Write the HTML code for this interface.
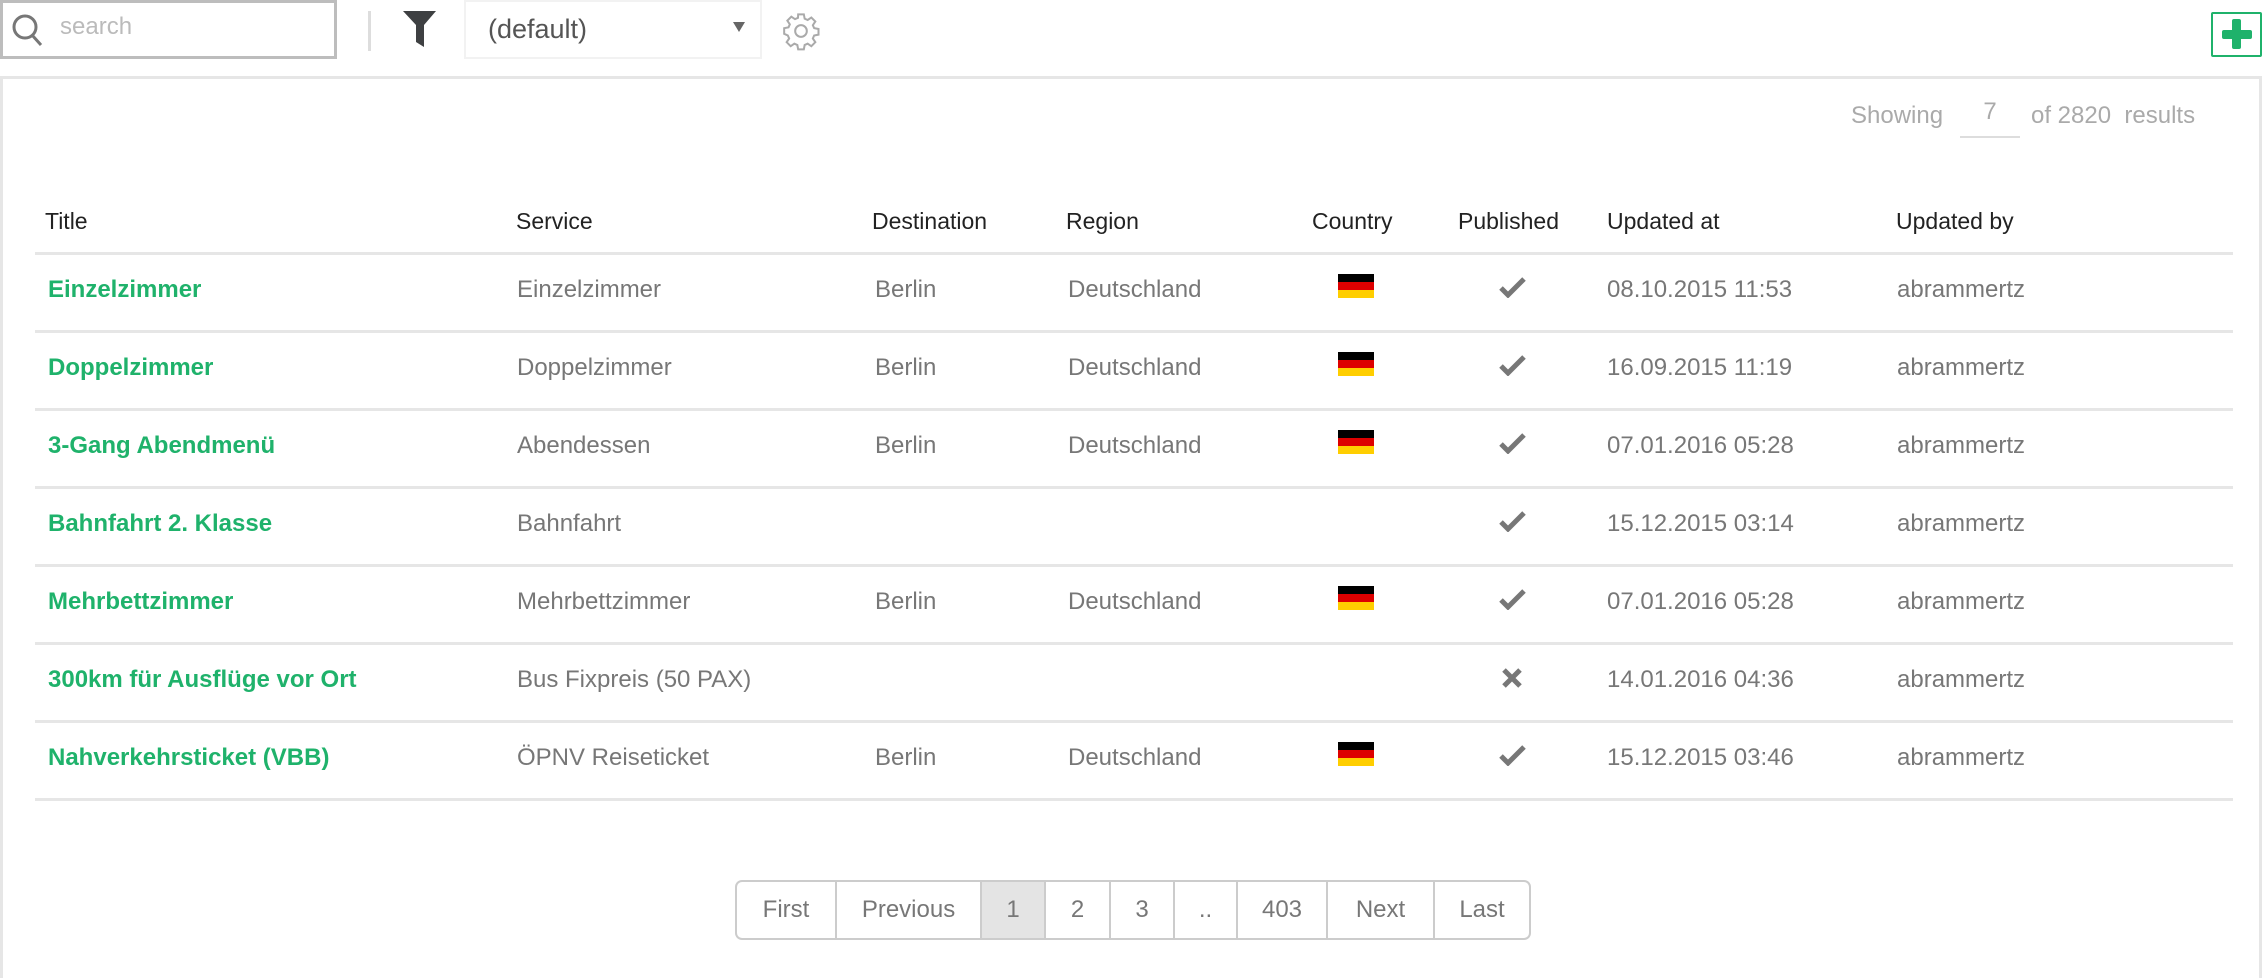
<!DOCTYPE html>
<html><head><meta charset="utf-8"><style>
*{margin:0;padding:0;box-sizing:border-box}
body{width:2264px;height:978px;background:#fff;font-family:"Liberation Sans",sans-serif;position:relative;overflow:hidden;color:#333}
.a{position:absolute;white-space:nowrap}
.search{left:0;top:0;width:337px;height:59px;border:3px solid #bdbdbd}
.sel{left:464px;top:0;width:298px;height:59px;border:2px solid #f2f2f2}
.panel{left:0;top:76px;width:2262px;height:902px;border:3px solid #e6e6e6;border-bottom:none}
.hd{top:208px;font-size:23px;color:#222}
.row{font-size:24px;color:#777}
.t{color:#1fb26b;font-weight:bold;font-size:24px}
.line{position:absolute;left:35px;width:2198px;height:3px;background:#e6e6e6}
.flag{position:absolute;left:1338px;width:36px;height:24px;background:linear-gradient(#000 0 33%,#d00 33% 66%,#ffce00 66%)}
.pg{position:absolute;left:735px;top:880px;height:60px;display:flex;border:2px solid #ccc;border-radius:7px;overflow:hidden}
.pg div{border-right:2px solid #ccc;font-size:24px;color:#777;display:flex;align-items:center;justify-content:center;height:100%}
.pg div:last-child{border-right:none}
</style></head><body>
<div class="a search"></div>
<svg class="a" style="left:11px;top:13px" width="34" height="36" viewBox="0 0 34 36"><circle cx="14" cy="14" r="11" fill="none" stroke="#777" stroke-width="3"/><line x1="21" y1="22" x2="30" y2="32" stroke="#777" stroke-width="3"/></svg>
<div class="a" style="left:60px;top:13px;font-size:24px;color:#bbb">search</div>
<div class="a" style="left:368px;top:11px;width:3px;height:40px;background:#ddd"></div>
<svg class="a" style="left:403px;top:11px" width="34" height="36" viewBox="0 0 34 36"><path d="M0 0H33L21 14V36L13 31V14Z" fill="#3e4042"/></svg>
<div class="a sel"></div>
<div class="a" style="left:488px;top:14px;font-size:27px;color:#555">(default)</div>
<div class="a" style="left:733px;top:22px;width:0;height:0;border-left:6px solid transparent;border-right:6px solid transparent;border-top:10px solid #666"></div>
<svg class="a" style="left:781px;top:11px" width="40" height="40" viewBox="0 0 24 24"><path fill="none" stroke="#aaa" stroke-width="1.2" d="M10.3 2h3.4l.5 2.6 1.8.8 2.2-1.5 2.4 2.4-1.5 2.2.8 1.8 2.6.5v3.4l-2.6.5-.8 1.8 1.5 2.2-2.4 2.4-2.2-1.5-1.8.8-.5 2.6h-3.4l-.5-2.6-1.8-.8-2.2 1.5-2.4-2.4 1.5-2.2-.8-1.8L1.9 13.7v-3.4l2.6-.5.8-1.8-1.5-2.2 2.4-2.4 2.2 1.5 1.8-.8z"/><circle cx="12" cy="12" r="3.5" fill="none" stroke="#aaa" stroke-width="1.2"/></svg>
<div class="a" style="left:2211px;top:12px;width:51px;height:45px;border:2px solid #1fb26b;border-radius:2px"></div>
<div class="a" style="left:2232px;top:19px;width:9px;height:30px;background:#1fb26b;border-radius:2px"></div>
<div class="a" style="left:2222px;top:30px;width:30px;height:9px;background:#1fb26b;border-radius:2px"></div>
<div class="a panel"></div>
<div class="a" style="left:1851px;top:102px;font-size:24px;color:#aaa">Showing</div>
<div class="a" style="left:1960px;top:98px;width:60px;height:40px;border-bottom:2px solid #ddd;text-align:center;font-size:24px;color:#aaa">7</div>
<div class="a" style="left:2031px;top:102px;font-size:24px;color:#aaa">of 2820 &nbsp;results</div>
<div class="a hd" style="left:45px">Title</div>
<div class="a hd" style="left:516px">Service</div>
<div class="a hd" style="left:872px">Destination</div>
<div class="a hd" style="left:1066px">Region</div>
<div class="a hd" style="left:1312px">Country</div>
<div class="a hd" style="left:1458px">Published</div>
<div class="a hd" style="left:1607px">Updated at</div>
<div class="a hd" style="left:1896px">Updated by</div>
<div class="line" style="top:252px"></div>
<div class="line" style="top:330px"></div>
<div class="line" style="top:408px"></div>
<div class="line" style="top:486px"></div>
<div class="line" style="top:564px"></div>
<div class="line" style="top:642px"></div>
<div class="line" style="top:720px"></div>
<div class="line" style="top:798px"></div>

<div class="a t" style="left:48px;top:276px">Einzelzimmer</div><div class="a row" style="left:517px;top:276px">Einzelzimmer</div><div class="a row" style="left:875px;top:276px">Berlin</div><div class="a row" style="left:1068px;top:276px">Deutschland</div><div class="flag" style="top:274px"></div><div class="a row" style="left:1607px;top:276px">08.10.2015 11:53</div><div class="a row" style="left:1897px;top:276px">abrammertz</div>
<div class="a t" style="left:48px;top:354px">Doppelzimmer</div><div class="a row" style="left:517px;top:354px">Doppelzimmer</div><div class="a row" style="left:875px;top:354px">Berlin</div><div class="a row" style="left:1068px;top:354px">Deutschland</div><div class="flag" style="top:352px"></div><div class="a row" style="left:1607px;top:354px">16.09.2015 11:19</div><div class="a row" style="left:1897px;top:354px">abrammertz</div>
<div class="a t" style="left:48px;top:432px">3-Gang Abendmenü</div><div class="a row" style="left:517px;top:432px">Abendessen</div><div class="a row" style="left:875px;top:432px">Berlin</div><div class="a row" style="left:1068px;top:432px">Deutschland</div><div class="flag" style="top:430px"></div><div class="a row" style="left:1607px;top:432px">07.01.2016 05:28</div><div class="a row" style="left:1897px;top:432px">abrammertz</div>
<div class="a t" style="left:48px;top:510px">Bahnfahrt 2. Klasse</div><div class="a row" style="left:517px;top:510px">Bahnfahrt</div><div class="a row" style="left:1607px;top:510px">15.12.2015 03:14</div><div class="a row" style="left:1897px;top:510px">abrammertz</div>
<div class="a t" style="left:48px;top:588px">Mehrbettzimmer</div><div class="a row" style="left:517px;top:588px">Mehrbettzimmer</div><div class="a row" style="left:875px;top:588px">Berlin</div><div class="a row" style="left:1068px;top:588px">Deutschland</div><div class="flag" style="top:586px"></div><div class="a row" style="left:1607px;top:588px">07.01.2016 05:28</div><div class="a row" style="left:1897px;top:588px">abrammertz</div>
<div class="a t" style="left:48px;top:666px">300km für Ausflüge vor Ort</div><div class="a row" style="left:517px;top:666px">Bus Fixpreis (50 PAX)</div><div class="a row" style="left:1607px;top:666px">14.01.2016 04:36</div><div class="a row" style="left:1897px;top:666px">abrammertz</div>
<div class="a t" style="left:48px;top:744px">Nahverkehrsticket (VBB)</div><div class="a row" style="left:517px;top:744px">ÖPNV Reiseticket</div><div class="a row" style="left:875px;top:744px">Berlin</div><div class="a row" style="left:1068px;top:744px">Deutschland</div><div class="flag" style="top:742px"></div><div class="a row" style="left:1607px;top:744px">15.12.2015 03:46</div><div class="a row" style="left:1897px;top:744px">abrammertz</div>

<svg class="a" style="left:1499px;top:276px" width="27" height="22" viewBox="0 0 27 22"><path d="M2 12L9 19L25 3" fill="none" stroke="#777" stroke-width="5"/></svg>
<svg class="a" style="left:1499px;top:354px" width="27" height="22" viewBox="0 0 27 22"><path d="M2 12L9 19L25 3" fill="none" stroke="#777" stroke-width="5"/></svg>
<svg class="a" style="left:1499px;top:432px" width="27" height="22" viewBox="0 0 27 22"><path d="M2 12L9 19L25 3" fill="none" stroke="#777" stroke-width="5"/></svg>
<svg class="a" style="left:1499px;top:510px" width="27" height="22" viewBox="0 0 27 22"><path d="M2 12L9 19L25 3" fill="none" stroke="#777" stroke-width="5"/></svg>
<svg class="a" style="left:1499px;top:588px" width="27" height="22" viewBox="0 0 27 22"><path d="M2 12L9 19L25 3" fill="none" stroke="#777" stroke-width="5"/></svg>
<svg class="a" style="left:1501px;top:667px" width="22" height="22" viewBox="0 0 22 22"><path d="M3 3L19 19M19 3L3 19" stroke="#777" stroke-width="5"/></svg>
<svg class="a" style="left:1499px;top:744px" width="27" height="22" viewBox="0 0 27 22"><path d="M2 12L9 19L25 3" fill="none" stroke="#777" stroke-width="5"/></svg>

<div class="pg">
<div style="width:100px">First</div>
<div style="width:145px">Previous</div>
<div style="width:64px;background:#e4e4e4">1</div>
<div style="width:65px">2</div>
<div style="width:64px">3</div>
<div style="width:63px">..</div>
<div style="width:90px">403</div>
<div style="width:107px">Next</div>
<div style="width:94px">Last</div>
</div>
</body></html>
